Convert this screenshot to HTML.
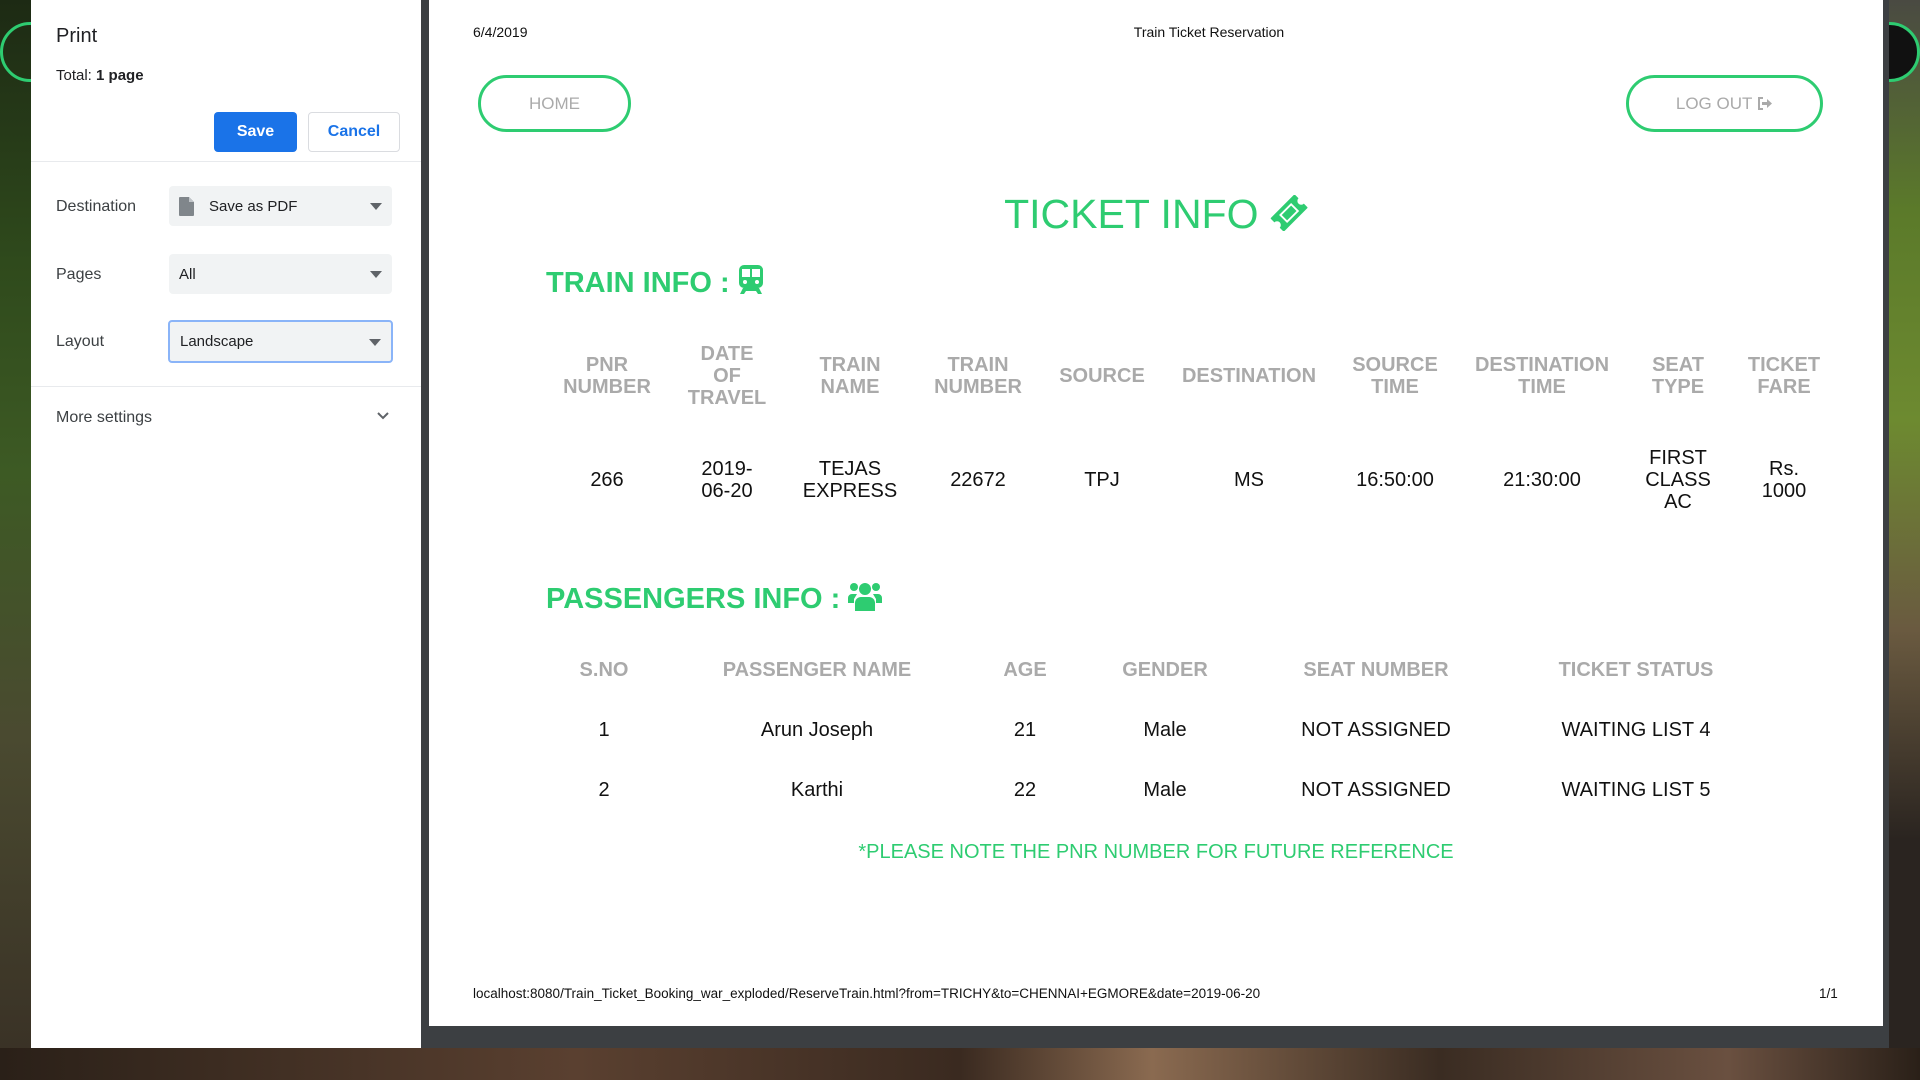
<!DOCTYPE html>
<html><head><meta charset="utf-8"><style>
*{margin:0;padding:0;box-sizing:border-box}
body{width:1920px;height:1080px;overflow:hidden;position:relative;font-family:"Liberation Sans",Arial,sans-serif;background:#1a1a14}
.abs{position:absolute}
.bgL{left:0;top:0;width:31px;height:1050px;background:linear-gradient(180deg,#1d2a14 0%,#2f4a1c 25%,#3d5a24 45%,#4a4a30 70%,#3a3226 100%)}
.bgR{left:1889px;top:0;width:31px;height:1050px;background:linear-gradient(180deg,#4a4a42 0%,#5b7a2a 20%,#6d8a30 40%,#6a5a40 60%,#2a2420 80%,#2a2420 100%)}
.bgB{left:0;top:1048px;width:1920px;height:32px;background:linear-gradient(90deg,#2a2018,#5a4030 30%,#3a2a20 50%,#8a6a50 60%,#3a2c22 75%,#6a5040 90%,#2a2018)}
.panel{left:31px;top:0;width:390px;height:1048px;background:#fff}
.gray{left:421px;top:0;width:1468px;height:1048px;background:#3c3f42}
.page{left:429px;top:0;width:1454px;height:1026px;background:#fff}
.c{transform:translateX(-50%);text-align:center;white-space:nowrap}
.th{color:#aaa;font-weight:bold;font-size:20px;line-height:22px}
.td{color:#111;font-size:20px;line-height:22px}
.g{color:#2ecc71}
.btn{border:3px solid #2ecc71;border-radius:30px;color:#aaa;font-size:17px;display:flex;align-items:center;justify-content:center}
.sel{background:#f1f3f4;border-radius:4px;font-size:15px;color:#202124;display:flex;align-items:center;padding-left:10px}
.arr{position:absolute;right:10px;top:50%;margin-top:-3px;border-left:6px solid transparent;border-right:6px solid transparent;border-top:7px solid #5f6368}
.lbl{font-size:16px;color:#3c4043}
</style></head><body>
<div class="abs bgL"></div><div class="abs bgR"></div><div class="abs bgB"></div>
<div class="abs" style="left:0;top:22px;width:60px;height:60px;border:3px solid #2ecc71;border-radius:50%"></div>
<div class="abs" style="left:1860px;top:22px;width:60px;height:60px;border:3px solid #2ecc71;border-radius:50%;background:#111"></div>
<div class="abs gray"></div>
<div class="abs panel">
 <div class="abs" style="left:25px;top:25px;font-size:20px;color:#202124">Print</div>
 <div class="abs" style="left:25px;top:67px;font-size:15px;color:#202124">Total: <b>1 page</b></div>
 <div class="abs" style="left:183px;top:112px;width:83px;height:40px;background:#1a73e8;border-radius:4px;color:#fff;font-weight:bold;font-size:16px;display:flex;align-items:center;justify-content:center">Save</div>
 <div class="abs" style="left:277px;top:112px;width:92px;height:40px;border:1px solid #dadce0;border-radius:4px;color:#1a73e8;font-weight:bold;font-size:16px;display:flex;align-items:center;justify-content:center">Cancel</div>
 <div class="abs" style="left:0;top:161px;width:390px;height:1px;background:#e8eaed"></div>
 <div class="abs lbl" style="left:25px;top:198px">Destination</div>
 <div class="abs sel" style="left:138px;top:186px;width:223px;height:40px;padding-left:40px"><svg class="abs" style="left:9px;top:11px" width="17" height="19" viewBox="0 0 17 19"><path d="M2 0h9l5 5v13a1 1 0 0 1-1 1H2a1 1 0 0 1-1-1V1a1 1 0 0 1 1-1z" fill="#80868b"/><path d="M11 0v5h5" fill="#c0c4c8"/></svg>Save as PDF<span class="arr"></span></div>
 <div class="abs lbl" style="left:25px;top:266px">Pages</div>
 <div class="abs sel" style="left:138px;top:254px;width:223px;height:40px">All<span class="arr"></span></div>
 <div class="abs lbl" style="left:25px;top:333px">Layout</div>
 <div class="abs sel" style="left:137px;top:320px;width:225px;height:43px;border:2px solid #8ab4f8">Landscape<span class="arr"></span></div>
 <div class="abs" style="left:0;top:386px;width:390px;height:1px;background:#e8eaed"></div>
 <div class="abs lbl" style="left:25px;top:409px">More settings</div>
 <svg class="abs" style="left:345px;top:411px" width="14" height="10" viewBox="0 0 14 10"><path d="M2 2l5 5 5-5" stroke="#5f6368" stroke-width="2" fill="none"/></svg>
</div>
<div class="abs page"></div>
<div class="abs" style="left:473px;top:24px;font-size:14px;color:#111">6/4/2019</div>
<div class="abs c" style="left:1209px;top:24px;font-size:14px;color:#111">Train Ticket Reservation</div>
<div class="abs btn" style="left:478px;top:75px;width:153px;height:57px">HOME</div>
<div class="abs btn" style="left:1626px;top:75px;width:197px;height:57px">LOG OUT&nbsp;<svg width="16" height="13" viewBox="0 0 16 13"><path d="M6 1H2v11h4" stroke="#aaa" stroke-width="2" fill="none"/><path d="M5 5h5V2l5 4.5-5 4.5V8H5z" fill="#aaa"/></svg></div>
<div class="abs c g" style="left:1156px;top:191px;font-size:41px;line-height:46px">TICKET INFO <svg width="38" height="36" viewBox="0 0 40 38" style="vertical-align:-3px"><g transform="rotate(-45 20 19)"><path d="M3 9h34a1 1 0 0 1 1 1v5a4 4 0 0 0 0 8v5a1 1 0 0 1-1 1H3a1 1 0 0 1-1-1v-5a4 4 0 0 0 0-8v-5a1 1 0 0 1 1-1z" fill="#2ecc71"/><rect x="11" y="13" width="18" height="12" fill="#fff"/><rect x="13" y="15" width="14" height="8" fill="#2ecc71"/></g></svg></div>
<div class="abs g" style="left:546px;top:265px;font-size:29px;font-weight:bold;line-height:34px">TRAIN INFO : <svg width="26" height="30" viewBox="0 0 26 30" style="vertical-align:-3px"><rect x="1" y="0" width="24" height="23" rx="5" fill="#2ecc71"/><rect x="4" y="4" width="8" height="8" fill="#fff"/><rect x="14" y="4" width="8" height="8" fill="#fff"/><circle cx="7" cy="17" r="2" fill="#fff"/><circle cx="19" cy="17" r="2" fill="#fff"/><path d="M5 23l-3 6h4l2-3h10l2 3h4l-3-6z" fill="#2ecc71"/></svg></div>
<div class="abs c th" style="left:607px;top:354px">PNR<br>NUMBER</div>
<div class="abs c th" style="left:727px;top:343px">DATE<br>OF<br>TRAVEL</div>
<div class="abs c th" style="left:850px;top:354px">TRAIN<br>NAME</div>
<div class="abs c th" style="left:978px;top:354px">TRAIN<br>NUMBER</div>
<div class="abs c th" style="left:1102px;top:365px">SOURCE</div>
<div class="abs c th" style="left:1249px;top:365px">DESTINATION</div>
<div class="abs c th" style="left:1395px;top:354px">SOURCE<br>TIME</div>
<div class="abs c th" style="left:1542px;top:354px">DESTINATION<br>TIME</div>
<div class="abs c th" style="left:1678px;top:354px">SEAT<br>TYPE</div>
<div class="abs c th" style="left:1784px;top:354px">TICKET<br>FARE</div>
<div class="abs c td" style="left:607px;top:469px">266</div>
<div class="abs c td" style="left:727px;top:458px">2019-<br>06-20</div>
<div class="abs c td" style="left:850px;top:458px">TEJAS<br>EXPRESS</div>
<div class="abs c td" style="left:978px;top:469px">22672</div>
<div class="abs c td" style="left:1102px;top:469px">TPJ</div>
<div class="abs c td" style="left:1249px;top:469px">MS</div>
<div class="abs c td" style="left:1395px;top:469px">16:50:00</div>
<div class="abs c td" style="left:1542px;top:469px">21:30:00</div>
<div class="abs c td" style="left:1678px;top:447px">FIRST<br>CLASS<br>AC</div>
<div class="abs c td" style="left:1784px;top:458px">Rs.<br>1000</div>
<div class="abs g" style="left:546px;top:581px;font-size:29px;font-weight:bold;line-height:34px">PASSENGERS INFO : <svg width="34" height="30" viewBox="0 0 34 30" style="vertical-align:-3px"><circle cx="17" cy="8" r="6" fill="#2ecc71"/><circle cx="6" cy="6" r="4" fill="#2ecc71"/><circle cx="28" cy="6" r="4" fill="#2ecc71"/><path d="M7 30v-8a6 6 0 0 1 6-6h8a6 6 0 0 1 6 6v8z" fill="#2ecc71"/><path d="M0 22v-5a4 4 0 0 1 4-4h5l-3 5v4z" fill="#2ecc71"/><path d="M34 22v-5a4 4 0 0 0-4-4h-5l3 5v4z" fill="#2ecc71"/></svg></div>
<div class="abs c th" style="left:604px;top:659px">S.NO</div>
<div class="abs c th" style="left:817px;top:659px">PASSENGER NAME</div>
<div class="abs c th" style="left:1025px;top:659px">AGE</div>
<div class="abs c th" style="left:1165px;top:659px">GENDER</div>
<div class="abs c th" style="left:1376px;top:659px">SEAT NUMBER</div>
<div class="abs c th" style="left:1636px;top:659px">TICKET STATUS</div>
<div class="abs c td" style="left:604px;top:719px">1</div>
<div class="abs c td" style="left:817px;top:719px">Arun Joseph</div>
<div class="abs c td" style="left:1025px;top:719px">21</div>
<div class="abs c td" style="left:1165px;top:719px">Male</div>
<div class="abs c td" style="left:1376px;top:719px">NOT ASSIGNED</div>
<div class="abs c td" style="left:1636px;top:719px">WAITING LIST 4</div>
<div class="abs c td" style="left:604px;top:779px">2</div>
<div class="abs c td" style="left:817px;top:779px">Karthi</div>
<div class="abs c td" style="left:1025px;top:779px">22</div>
<div class="abs c td" style="left:1165px;top:779px">Male</div>
<div class="abs c td" style="left:1376px;top:779px">NOT ASSIGNED</div>
<div class="abs c td" style="left:1636px;top:779px">WAITING LIST 5</div>
<div class="abs c g" style="left:1156px;top:841px;font-size:20px;line-height:22px">*PLEASE NOTE THE PNR NUMBER FOR FUTURE REFERENCE</div>
<div class="abs" style="left:473px;top:986px;font-size:13.5px;color:#111">localhost:8080/Train_Ticket_Booking_war_exploded/ReserveTrain.html?from=TRICHY&amp;to=CHENNAI+EGMORE&amp;date=2019-06-20</div>
<div class="abs" style="left:1819px;top:986px;font-size:13.5px;color:#111">1/1</div>
</body></html>
